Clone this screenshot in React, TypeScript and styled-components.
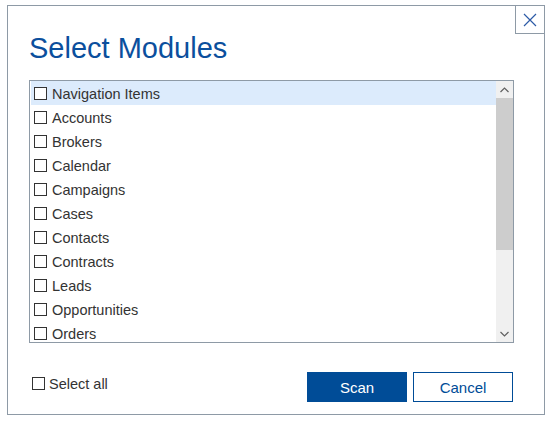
import React, { useState } from 'react';
import styled, { createGlobalStyle } from 'styled-components';

const modules = [
  'Navigation Items',
  'Accounts',
  'Brokers',
  'Calendar',
  'Campaigns',
  'Cases',
  'Contacts',
  'Contracts',
  'Leads',
  'Opportunities',
  'Orders',
];

const App: React.FC = () => {
  const [checked, setChecked] = useState<Record<string, boolean>>({});
  const [selected, setSelected] = useState('Navigation Items');
  const allChecked = modules.every((m) => checked[m]);

  const toggle = (name: string) => setChecked({ ...checked, [name]: !checked[name] });
  const toggleAll = () => {
    const next: Record<string, boolean> = {};
    modules.forEach((m) => (next[m] = !allChecked));
    setChecked(next);
  };

  return (
    <>
      <GlobalStyle />
      <Dialog>
        <CloseButton aria-label="Close">
          <svg width="14" height="14" viewBox="0 0 14 14">
            <path d="M1 1 L13 13 M13 1 L1 13" stroke="#2d5ba6" strokeWidth="1.2" fill="none" />
          </svg>
        </CloseButton>

        <Title>Select Modules</Title>

        <ListBox>
          <Items>
            {modules.map((name) => (
              <Row key={name} $active={selected === name} onClick={() => setSelected(name)}>
                <Check $on={!!checked[name]} onClick={() => toggle(name)} />
                <Label>{name}</Label>
              </Row>
            ))}
          </Items>
          <ScrollBar>
            <ScrollButton>
              <svg width="9" height="6" viewBox="0 0 9 6">
                <path d="M0.5 5 L4.5 1 L8.5 5" stroke="#606060" strokeWidth="1.2" fill="none" />
              </svg>
            </ScrollButton>
            <Track>
              <Thumb />
            </Track>
            <ScrollButton>
              <svg width="9" height="6" viewBox="0 0 9 6">
                <path d="M0.5 1 L4.5 5 L8.5 1" stroke="#606060" strokeWidth="1.2" fill="none" />
              </svg>
            </ScrollButton>
          </ScrollBar>
        </ListBox>

        <Footer>
          <SelectAll onClick={toggleAll}>
            <Check $on={allChecked} />
            <Label>Select all</Label>
          </SelectAll>
          <Buttons>
            <Button $primary>Scan</Button>
            <Button>Cancel</Button>
          </Buttons>
        </Footer>
      </Dialog>
    </>
  );
};

const GlobalStyle = createGlobalStyle`
  body {
    margin: 0;
    background: #ffffff;
    font-family: "Liberation Sans", Arial, sans-serif;
  }
  * { box-sizing: border-box; }
`;

const Dialog = styled.div`
  position: relative;
  margin: 5px 0 0 7px;
  width: 538px;
  height: 410px;
  border: 1px solid #8e9aa6;
  background: #ffffff;
  display: flex;
  flex-direction: column;
`;

const CloseButton = styled.button`
  position: absolute;
  top: -1px;
  right: -1px;
  width: 30px;
  height: 29px;
  border: 1px solid #8e9aa6;
  background: #ffffff;
  display: flex;
  align-items: center;
  justify-content: center;
  padding: 0;
  cursor: pointer;
`;

const Title = styled.h1`
  margin: 26px 0 0 21px;
  font-size: 29px;
  line-height: 32px;
  font-weight: normal;
  color: #0b4f9d;
`;

const ListBox = styled.div`
  margin: 16px 0 0 21px;
  width: 485px;
  height: 263px;
  border: 1px solid #8e9aa6;
  display: flex;
`;

const Items = styled.div`
  flex: 1;
  overflow: hidden;
  padding-left: 1px;
`;

const Row = styled.div<{ $active?: boolean }>`
  height: 24px;
  display: flex;
  align-items: center;
  padding: 1px 0 0 3px;
  background: ${(p) => (p.$active ? '#dcebfc' : 'transparent')};
  cursor: default;
`;

const Check = styled.span<{ $on?: boolean }>`
  width: 13px;
  height: 13px;
  flex: none;
  border: 1px solid #333333;
  background: ${(p) => (p.$on ? '#0b4f9d' : '#ffffff')};
  margin-right: 5px;
`;

const Label = styled.span`
  font-size: 14.5px;
  color: #333333;
  white-space: nowrap;
`;

const ScrollBar = styled.div`
  width: 17px;
  display: flex;
  flex-direction: column;
  background: #f0f0f0;
`;

const ScrollButton = styled.div`
  height: 17px;
  flex: none;
  display: flex;
  align-items: center;
  justify-content: center;
`;

const Track = styled.div`
  flex: 1;
`;

const Thumb = styled.div`
  height: 152px;
  background: #cdcdcd;
`;

const Footer = styled.div`
  margin: 29px 31px 0 24px;
  display: flex;
  align-items: center;
  justify-content: space-between;
`;

const SelectAll = styled.label`
  display: flex;
  align-items: center;
  cursor: pointer;
  margin-top: -7px;

  ${Check} {
    margin-right: 4px;
  }
`;

const Buttons = styled.div`
  display: flex;
  gap: 6px;
`;

const Button = styled.button<{ $primary?: boolean }>`
  width: 100px;
  height: 30px;
  font-family: "Liberation Sans", Arial, sans-serif;
  font-size: 15px;
  border: 1px solid #004c97;
  background: ${(p) => (p.$primary ? '#004c97' : '#ffffff')};
  color: ${(p) => (p.$primary ? '#ffffff' : '#004c97')};
  cursor: pointer;
  padding: 0;
`;

export default App;
